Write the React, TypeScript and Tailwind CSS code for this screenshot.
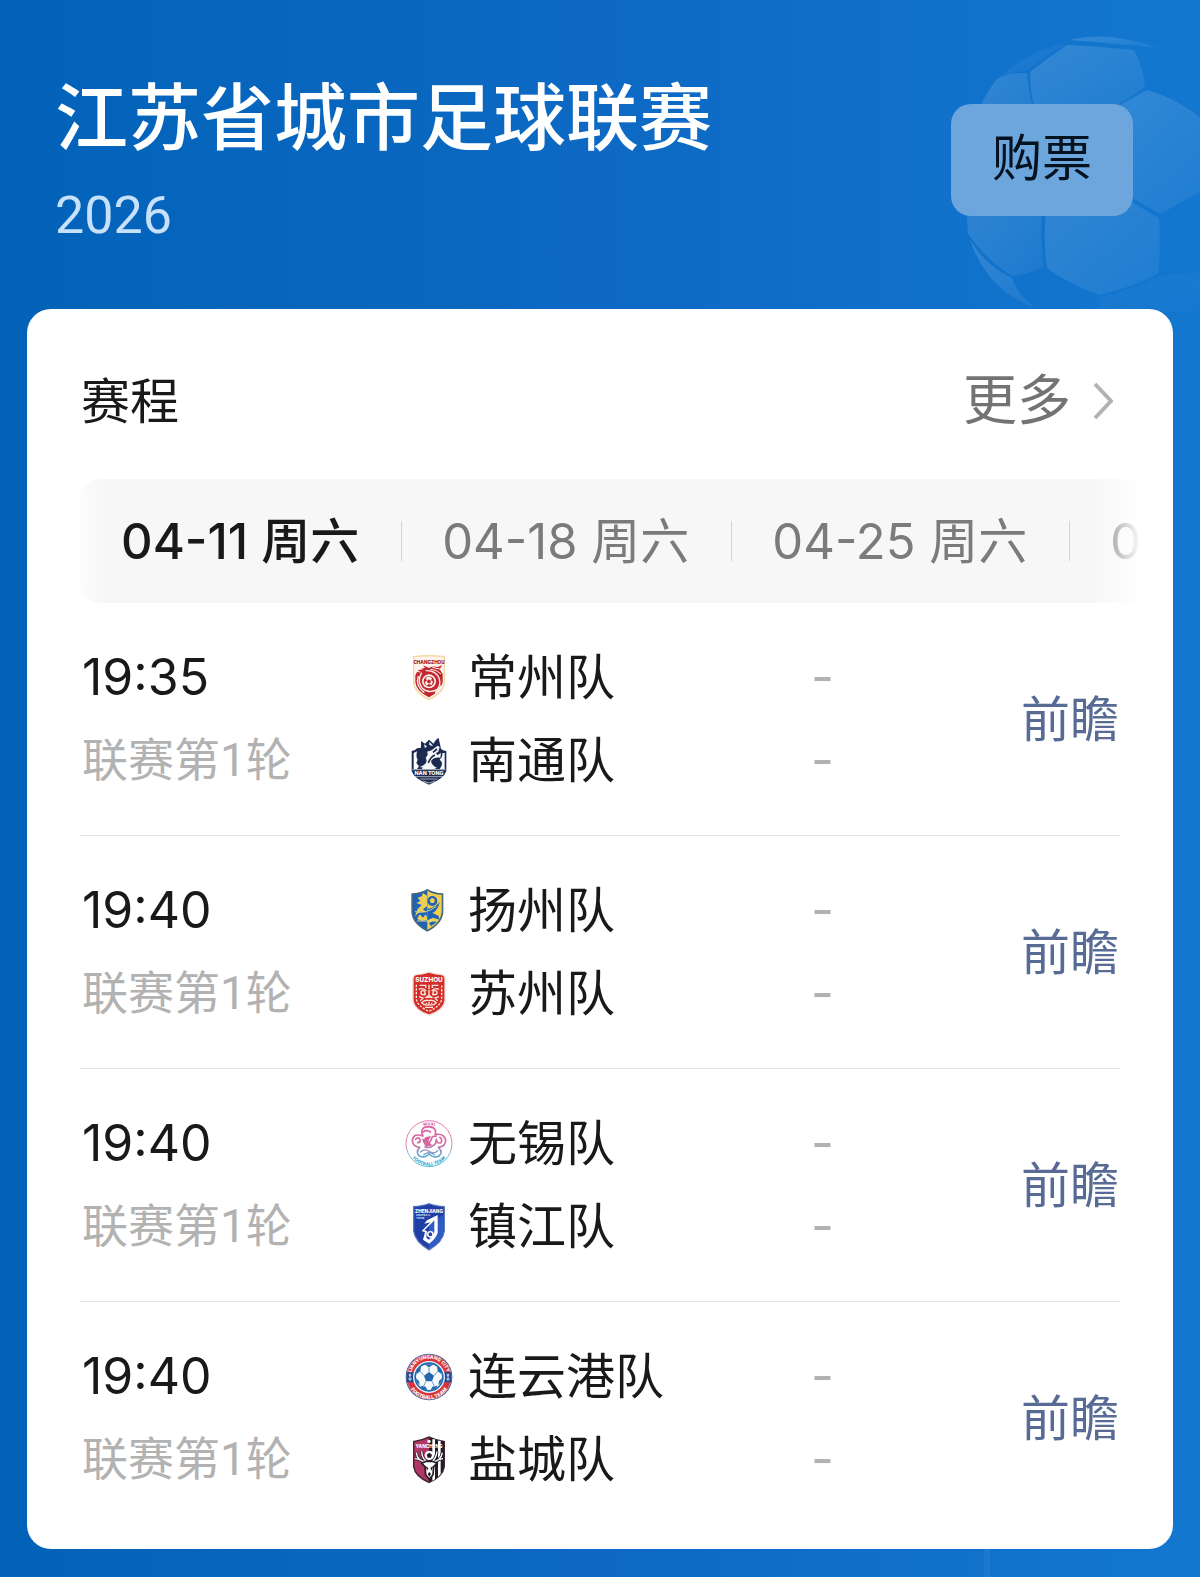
import type { ReactNode } from "react";

function Crest({ label, children }: { label: string; children: ReactNode }) {
  return (
    <svg viewBox="0 0 144 144" className="size-12 shrink-0" role="img" aria-label={label}>
      {children}
    </svg>
  );
}

const crestText = { fontFamily: "Inter, sans-serif", fontWeight: 800, textAnchor: "middle" as const };

function Changzhou() {
  return (
    <Crest label="常州队">
      <path d="M24 6Q72 0 120 6V84Q118 118 72 139Q26 118 24 84Z" fill="#f2d9a4" />
      <path d="M28 10Q72 5 116 10V83Q114 114 72 134Q30 114 28 83Z" fill="#fdf3ec" />
      <text x="72" y="29" fontSize="14" fill="#a3161f" {...crestText}>CHANGZHOU</text>
      <path d="M31 64Q36 45 60 42L54 34L72 42Q84 35 98 39L112 34L104 46L113 60V84Q110 110 72 130Q33 112 31 84Z" fill="#c2262e" />
      <path d="M34 42L52 46M34 52L46 54M76 46Q94 46 108 60M82 40L108 46" stroke="#fdf3ec" strokeWidth="3" fill="none" />
      <path d="M50 56Q35 82 52 103Q70 120 96 107M62 50Q92 48 103 74Q108 94 96 107M40 66Q30 96 58 116M90 116Q104 108 109 94" stroke="#fdf3ec" strokeWidth="4" fill="none" />
      <circle cx="72" cy="82" r="21" fill="#fdf3ec" />
      <circle cx="72" cy="82" r="16" fill="#c2262e" />
      <path d="M72 67L81 73L78 79L84 83L80 93L72 90L64 95L59 84L66 80L62 72Z" fill="#fdf3ec" />
      <path d="M72 76L78 81L76 88H68L66 81Z" fill="#c2262e" />
    </Crest>
  );
}

function Nantong() {
  return (
    <Crest label="南通队">
      <path d="M20 42Q30 42 36 34L48 32V12L60 20L72 8L86 20Q92 6 101 3L106 26L108 36Q116 42 124 42V102Q118 124 72 143Q26 124 20 102Z" fill="#1b2a4e" />
      <path d="M26 48L36 43Q32 60 38 68L34 78L42 88L36 96H26Z" fill="#fff" />
      <path d="M57 22L66 28L60 34ZM73 24L84 28Q80 20 73 14ZM80 40L98 26L104 30L100 44L92 49L98 54L108 48L106 62Q86 60 78 72Q80 86 96 92L88 96H50L62 84L56 92L44 90Q72 80 62 62Q72 54 66 44Z" fill="#f5f6fa" />
      <path d="M112 48H119V96H104Q118 78 104 68Q114 60 112 48Z" fill="#f5f6fa" />
      <path d="M84 46L96 36M70 78Q76 60 90 54M96 66Q84 74 92 84L100 92" stroke="#1b2a4e" strokeWidth="5" fill="none" />
      <path d="M22 98H122" stroke="#fff" strokeWidth="2" />
      <text x="72" y="115" fontSize="16" fill="#fff" {...crestText}>NAN TONG</text>
      <path d="M26 119H118M46 126H98M54 132L72 138L90 132" stroke="#e8ebf2" strokeWidth="2" fill="none" />
    </Crest>
  );
}

function Yangzhou() {
  return (
    <Crest label="扬州队">
      <path d="M67 6Q86 18 115 19V76Q112 112 67 134Q22 112 19 76V19Q48 18 67 6Z" fill="#46667f" />
      <path d="M67 11V129Q28 110 24 76V23Q49 23 67 11Z" fill="#1f63b8" />
      <path d="M67 11Q85 23 110 23V76Q106 110 67 129Z" fill="#efcf4d" />
      <path d="M38 32L50 28L54 18L66 26V58L54 66L64 76L44 74L30 88L38 66L50 54L34 48L46 42Z" fill="#e9cf55" />
      <path d="M36 96L44 82L54 92L62 82L67 92V98L52 102Z" fill="#e9cf55" />
      <circle cx="82" cy="42" r="15" fill="#1f63b8" />
      <path d="M82 32L90 38L87 48H77L74 38Z" fill="#efcf4d" />
      <path d="M67 66Q90 62 104 46Q98 72 82 78L100 86L104 98L84 92L67 100ZM72 108L84 102L96 104L78 118Z" fill="#1f63b8" />
      <path d="M30 74Q62 82 94 58M36 102H98" stroke="#d9d58c" strokeWidth="3" fill="none" />
    </Crest>
  );
}

function Suzhou() {
  return (
    <Crest label="苏州队">
      <path d="M72 5Q92 12 112 13Q122 16 122 26V92Q118 122 72 137Q26 122 22 92V26Q22 16 32 13Q52 12 72 5Z" fill="#f6d9d3" />
      <path d="M72 8Q92 15 111 16Q118 18 118 26V92Q114 118 72 133Q30 118 26 92V26Q26 18 33 16Q52 15 72 8Z" fill="#d32d2a" />
      <text x="72" y="36" fontSize="19" fill="#fff" {...crestText}>SUZHOU</text>
      <g fill="none" stroke="#fbe7df" strokeWidth="4">
        <path d="M34 44V86Q36 108 72 124Q108 108 110 86V44" strokeDasharray="7 4" />
        <path d="M44 46H62V54M100 46H82V54M72 44V58M42 58Q52 52 64 62M102 58Q92 52 80 62" />
        <circle cx="54" cy="68" r="6" />
        <circle cx="90" cy="68" r="6" />
        <path d="M72 60V76L64 82H80L72 76M42 80L54 84L46 92M102 80L90 84L98 92M50 98Q60 88 72 92Q84 88 94 98Q84 108 72 104Q60 108 50 98ZM60 112H84M64 98V102M72 96V103M80 98V102M58 76L62 72M86 76L82 72" />
      </g>
    </Crest>
  );
}

function Wuxi() {
  return (
    <Crest label="无锡队">
      <defs>
        <linearGradient id="wuxi" x1="0" y1="0" x2="0" y2="144" gradientUnits="userSpaceOnUse">
          <stop offset="0" stopColor="#df5c98" />
          <stop offset=".5" stopColor="#d56da6" />
          <stop offset=".72" stopColor="#69a6cf" />
          <stop offset="1" stopColor="#32b3da" />
        </linearGradient>
        <path id="wuxi-top" d="M16 72A56 56 0 0 1 128 72" />
        <path id="wuxi-bottom" d="M7 72A65 65 0 0 0 137 72" />
      </defs>
      <circle cx="72" cy="71" r="69" fill="#fff" stroke="url(#wuxi)" strokeWidth="2.5" />
      <g fill="none" stroke="url(#wuxi)" strokeWidth="5" strokeLinecap="round">
        <path d="M54 48Q42 22 70 20Q98 22 90 44M54 48Q26 38 22 60Q22 80 44 82M90 44Q116 38 122 60Q122 80 100 82M44 82Q30 98 44 108Q60 116 72 102M100 82Q116 98 102 108Q86 116 72 102" />
        <path d="M54 36Q66 28 76 36M32 58Q40 48 46 60Q46 68 38 68M104 52Q114 58 108 68Q98 72 94 60M54 58L62 74L76 64L82 50L94 48M60 80Q74 88 92 70L94 58" />
        <path d="M46 96Q60 84 72 94Q86 104 98 92M56 104Q72 92 88 104" strokeWidth="4" />
      </g>
      <path d="M60 52L78 48L70 64L82 76L64 80L54 66Z" fill="#d666a1" />
      <text fontSize="12" fill="#d95797" {...crestText}>
        <textPath href="#wuxi-top" startOffset="50%">WUXI</textPath>
      </text>
      <text fontSize="13" fill="#38a8cf" {...crestText}>
        <textPath href="#wuxi-bottom" startOffset="50%">FOOTBALL TEAM</textPath>
      </text>
    </Crest>
  );
}

function Zhenjiang() {
  return (
    <Crest label="镇江队">
      <path d="M72 0Q92 8 120 9V84Q116 118 72 143Q28 118 24 84V9Q52 8 72 0Z" fill="#5a77bd" />
      <path d="M72 4Q92 12 116 13V84Q112 115 72 138Q32 115 28 84V13Q52 12 72 4Z" fill="#1f3fa6" />
      <path d="M72 60L116 36V84Q112 115 72 138Z" fill="#2f5cc4" />
      <text x="72" y="29" fontSize="14" fill="#fff" {...crestText}>ZHENJIANG</text>
      <text x="55" y="39" fontSize="8" fill="#cfdaf5" {...crestText}>FOOTBALL</text>
      <text x="46" y="48" fontSize="8" fill="#cfdaf5" {...crestText}>TEAM</text>
      <path d="M98 36L66 52L58 62L76 58L50 84L60 88L54 110L72 122Q92 108 98 90ZM88 52V88Q84 102 72 110L64 104L66 84L58 82L84 56Z" fill="#fff" fillRule="evenodd" />
      <circle cx="76" cy="94" r="10" fill="#fff" />
      <path d="M76 87L82 92L80 99H72L70 92Z" fill="#1f3fa6" />
    </Crest>
  );
}

function Lianyungang() {
  return (
    <Crest label="连云港队">
      <defs>
        <path id="lyg-top" d="M17 72A55 55 0 0 1 127 72" />
        <path id="lyg-bottom" d="M6 72A66 66 0 0 0 138 72" />
      </defs>
      <circle cx="72" cy="72" r="70" fill="#27407c" />
      <circle cx="72" cy="72" r="67" fill="#d9343c" stroke="#e8ecf4" strokeWidth="1.5" />
      <path d="M5 58H139V88H5Z" fill="#204a93" />
      <circle cx="72" cy="72" r="48" fill="#e9f1f8" />
      <circle cx="72" cy="72" r="44" fill="#2268ae" />
      <circle cx="72" cy="72" r="39" fill="#f7fafc" />
      <g fill="#2268ae">
        <path d="M72 57L87 68L81 85H63L57 68Z" />
        <path d="M58 34L72 43L86 34ZM34 64L46 55L48 40L36 50ZM110 64L98 55L96 40L108 50ZM46 98L62 101L67 112L52 108ZM98 98L82 101L77 112L92 108ZM32 74L42 84L44 96L36 88ZM112 74L102 84L100 96L108 88Z" />
      </g>
      <path d="M72 43V57M46 55L57 68M98 55L87 68M63 85L56 99M81 85L88 99" stroke="#2268ae" strokeWidth="2" />
      <path d="M15 62V82M10 77Q15 86 20 77M11 66H19M129 62V82M124 77Q129 86 134 77M125 66H133" stroke="#fff" strokeWidth="2.5" fill="none" />
      <text fontSize="14" fill="#fff" {...crestText}>
        <textPath href="#lyg-top" startOffset="50%">LIANYUNGANG CITY</textPath>
      </text>
      <text fontSize="15" fill="#fff" {...crestText}>
        <textPath href="#lyg-bottom" startOffset="50%">FOOTBALL TEAM</textPath>
      </text>
    </Crest>
  );
}

function Yancheng() {
  return (
    <Crest label="盐城队">
      <path d="M72 1Q92 11 120 15V92Q116 122 72 142Q28 122 24 92V15Q52 11 72 1Z" fill="#3a2633" />
      <path d="M72 5V137Q31 118 28 91V18Q53 14 72 5Z" fill="#b03666" />
      <path d="M72 5Q91 14 116 18V91Q112 118 72 137Z" fill="#221c22" />
      <path d="M82 10H90V130L82 134ZM99 14H107V114L99 122Z" fill="#fff" />
      <circle cx="72" cy="16" r="5" fill="#fff" />
      <text x="72" y="37" fontSize="14" fill="#fff" {...crestText}>YANCHENG</text>
      <circle cx="73" cy="58" r="14" fill="#fff" />
      <path d="M73 50L81 56L78 65H68L65 56Z" fill="#221c22" />
      <path d="M66 78Q36 76 34 50M66 78Q50 66 50 46M42 70L30 68M80 78Q108 76 112 50M80 78Q94 66 96 46M104 70L114 68" fill="none" stroke="#221c22" strokeWidth="9" />
      <path d="M66 78Q36 76 34 50M66 78Q50 66 50 46M42 70L30 68M80 78Q108 76 112 50M80 78Q94 66 96 46M104 70L114 68" fill="none" stroke="#fff" strokeWidth="4" />
      <path d="M50 82L64 76H82L96 82L86 92L84 116L73 130L62 116L60 92Z" fill="#fff" stroke="#221c22" strokeWidth="5" />
      <path d="M62 90L70 96L66 104ZM84 90L76 96L80 104ZM68 114L73 108L78 114L73 122Z" fill="#221c22" />
    </Crest>
  );
}

type Team = { name: string; crest: ReactNode };
type Match = { time: string; round: string; teams: Team[] };

const matches: Match[] = [
  { time: "19:35", round: "联赛第1轮", teams: [{ name: "常州队", crest: <Changzhou /> }, { name: "南通队", crest: <Nantong /> }] },
  { time: "19:40", round: "联赛第1轮", teams: [{ name: "扬州队", crest: <Yangzhou /> }, { name: "苏州队", crest: <Suzhou /> }] },
  { time: "19:40", round: "联赛第1轮", teams: [{ name: "无锡队", crest: <Wuxi /> }, { name: "镇江队", crest: <Zhenjiang /> }] },
  { time: "19:40", round: "联赛第1轮", teams: [{ name: "连云港队", crest: <Lianyungang /> }, { name: "盐城队", crest: <Yancheng /> }] },
];

const dates = ["04-11 周六", "04-18 周六", "04-25 周六", "05-01 周五"];

function Football() {
  return (
    <svg viewBox="0 0 240 280" className="absolute right-0 top-[32px] h-[280px] w-[240px]" aria-hidden="true">
      <defs>
        <linearGradient id="ball" x1="0" y1="0" x2="1" y2="1">
          <stop offset="0" stopColor="#fff" stopOpacity=".15" />
          <stop offset="1" stopColor="#fff" stopOpacity=".05" />
        </linearGradient>
      </defs>
      <g fill="url(#ball)">
        <path d="M109 8Q150 -2 198 16Q160 12 109 8Z" />
        <path d="M91 24L107 13Q135 14 174 18Q183 34 185 55L160 72L130 92H78Q70 64 70 40Z" />
        <path d="M40 45Q68 18 107 11L89 22L68 38Q52 40 36 48Z" fillOpacity=".4" />
        <path d="M36 48Q50 40 67 41Q70 70 76 86L60 120L14 140Q4 90 36 48Z" />
        <path d="M187 58Q220 68 240 86V160L200 182L172 166L140 140L130 95L160 73Z" />
        <path d="M80 130L140 140L168 168L199 186Q201 215 198 242Q170 256 139 263Q105 250 87 236Q83 210 86 178Z" />
        <path d="M8 150L60 130L82 176Q80 210 84 234Q70 242 52 244Q26 228 8 202Q6 180 8 150Z" />
        <path d="M10 208Q26 234 52 246Q58 264 76 276Q28 260 10 208Z" />
        <path d="M139 266Q170 258 200 244L240 240V280H139Z" fillOpacity=".25" />
      </g>
    </svg>
  );
}

export default function App() {
  return (
    <main className="relative min-h-screen overflow-hidden bg-linear-to-r from-[#0262b8] via-[#0d69c3] to-[#1377d0] px-[27px] pb-7 font-['Inter','Noto_Sans_CJK_SC',sans-serif]">
      <Football />
      <header className="relative flex h-[309px] items-start justify-between pl-7 pr-10">
        <div className="pt-[74px]">
          <h1 className="text-[73px] leading-[88px] font-medium text-white">江苏省城市足球联赛</h1>
          <p className="mt-[22px] font-['Roboto',sans-serif] text-[52px] leading-[64px] text-[#c7e1fb]">2026</p>
        </div>
        <button type="button" className="mt-[104px] h-28 rounded-[20px] bg-[#6ca6dc] px-[41px] pb-1 text-[50px] leading-none text-[#05121f]">
          购票
        </button>
      </header>

      <section className="relative rounded-3xl bg-white px-[53px] pb-[15px]">
        <div className="flex h-[170px] items-center justify-between pt-[14px]">
          <h2 className="pl-px text-[49px] leading-none text-[#191919]">赛程</h2>
          <a href="#more" className="flex items-center gap-[22px] pr-[7px] text-[54px] leading-none text-[#737373]">
            更多
            <svg viewBox="0 0 20 38" className="h-[38px] w-5" fill="none" stroke="#b2b2b2" strokeWidth="4" aria-hidden="true">
              <path d="M2 2L18 19L2 36" />
            </svg>
          </a>
        </div>

        <nav className="relative -mr-6 h-[124px] overflow-hidden rounded-l-[20px] bg-[#f7f7f7]">
          <div className="flex h-full w-max items-center">
            {dates.map((date, i) => (
              <button
                key={date}
                type="button"
                className={
                  i === 0
                    ? "pl-[41px] pr-[42px] text-[49px] leading-none font-medium text-[#191919]"
                    : "relative pl-[41px] pr-[42px] text-[49px] leading-none text-[#7b7b7b] before:absolute before:left-0 before:top-1 before:h-10 before:w-px before:bg-[#d4d4d4]"
                }
              >
                {date}
              </button>
            ))}
          </div>
          <div className="absolute inset-y-0 left-0 w-6 bg-linear-to-r from-white/60 to-transparent" />
          <div className="absolute inset-y-0 right-0 w-[52px] bg-linear-to-l from-white from-5% to-transparent" />
        </nav>

        <ul>
          {matches.map((match, i) => (
            <li
              key={i}
              className="grid grid-cols-[325fr_355fr_125fr_235fr] items-center border-t border-[#e5e5e5] py-[33px] first:border-t-0"
            >
              <div className="pl-[2px]">
                <p className="text-[50px] leading-[83px] text-[#191919]">{match.time}</p>
                <p className="font-['Roboto','Noto_Sans_CJK_SC',sans-serif] text-[46px] leading-[83px] text-[#b2b2b2]">{match.round}</p>
              </div>
              <div>
                {match.teams.map((team) => (
                  <div key={team.name} className="flex h-[83px] items-center gap-[15px] text-[49px] leading-none text-[#191919]">
                    {team.crest}
                    <span>{team.name}</span>
                  </div>
                ))}
              </div>
              <div className="text-center text-[50px] leading-[83px] text-[#b2b2b2]">
                <p>-</p>
                <p>-</p>
              </div>
              <a href="#preview" className="justify-self-end pr-px text-[49px] leading-none text-[#576b95]">
                前瞻
              </a>
            </li>
          ))}
        </ul>
      </section>
      <div className="absolute bottom-0 left-[82%] h-7 w-[6px] bg-white/5" />
    </main>
  );
}
